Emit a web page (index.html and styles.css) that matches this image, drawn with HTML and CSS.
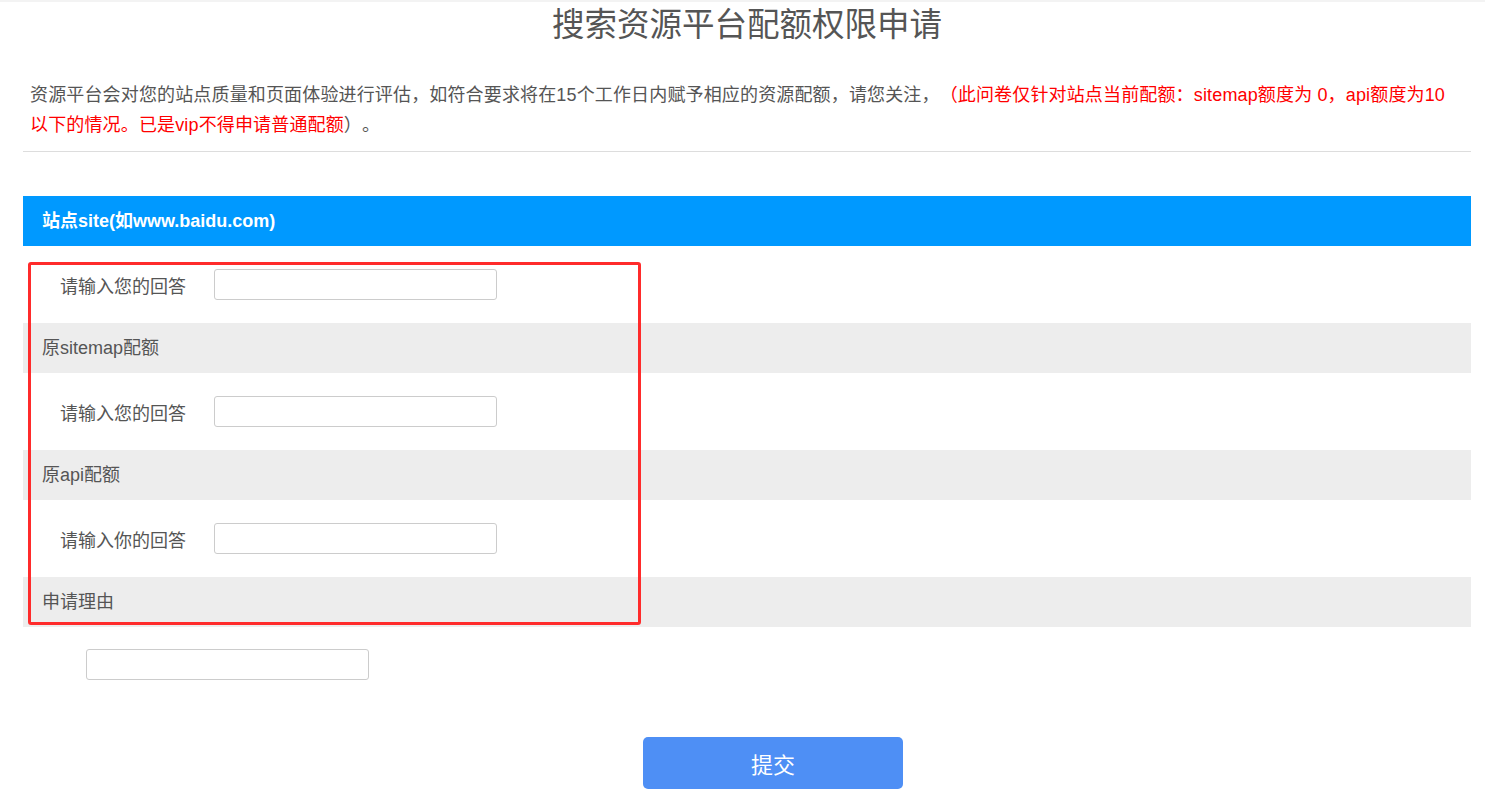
FILE: index.html
```html
<!DOCTYPE html>
<html lang="zh">
<head>
<meta charset="utf-8">
<title>搜索资源平台配额权限申请</title>
<link rel="stylesheet" href="styles.css">
</head>
<body>
<div class="page">
  <h1 class="title">搜索资源平台配额权限申请</h1>
  <p class="intro">资源平台会对您的站点质量和页面体验进行评估，如符合要求将在15个工作日内赋予相应的资源配额，请您关注，<span class="warn">（此问卷仅针对站点当前配额：sitemap额度为 0，api额度为10以下的情况。已是vip不得申请普通配额</span>）。</p>
  <div class="divider"></div>

  <div class="form">
    <div class="section-head">站点site(如www.baidu.com)</div>
    <div class="answer-row">
      <span class="answer-label">请输入您的回答</span>
      <input class="answer-input" type="text">
    </div>
    <div class="question">原sitemap配额</div>
    <div class="answer-row">
      <span class="answer-label">请输入您的回答</span>
      <input class="answer-input" type="text">
    </div>
    <div class="question">原api配额</div>
    <div class="answer-row">
      <span class="answer-label">请输入你的回答</span>
      <input class="answer-input" type="text">
    </div>
    <div class="question">申请理由</div>
    <div class="reason-row">
      <input class="answer-input" type="text">
    </div>
    <div class="actions">
      <button class="submit" type="button">提交</button>
    </div>
    <div class="highlight"></div>
  </div>
</div>
</body>
</html>
```

FILE: styles.css
```css
* { box-sizing: border-box; }
html, body { margin: 0; padding: 0; background: #fff; }
body {
  font-family: "Liberation Sans", "Noto Sans CJK SC", sans-serif;
  color: #555;
  border-top: 2px solid #f3f3f3;
}
.page {
  padding: 0 14px 0 23px;
}
.title {
  margin: 0;
  font-size: 32.5px;
  font-weight: normal;
  line-height: 46px;
  text-align: center;
  color: #555;
}
.intro {
  margin: 32px 0 0;
  padding: 0 22px 0 7px;
  font-size: 18px;
  line-height: 30px;
  color: #555;
  text-spacing-trim: space-all;
  letter-spacing: 0.15px;
}
.warn { color: #ff0000; }
.divider {
  margin-top: 11px;
  height: 1px;
  background: #dddddd;
}
.form {
  position: relative;
  margin-top: 44px;
}
.section-head {
  height: 50px;
  line-height: 50px;
  padding-left: 19px;
  background: #0099ff;
  color: #fff;
  font-weight: bold;
  font-size: 18px;
}
.answer-row {
  height: 77px;
  display: flex;
  align-items: center;
  padding-left: 37px;
}
.answer-label {
  width: 154px;
  font-size: 18px;
  color: #555;
}
.answer-input {
  width: 283px;
  height: 31px;
  border: 1px solid #cccccc;
  border-radius: 3px;
  background: #fff;
  margin: 0;
  padding: 0 6px;
}
.question {
  height: 50px;
  line-height: 50px;
  padding-left: 19px;
  background: #ededed;
  font-size: 18px;
  color: #555;
}
.reason-row {
  padding: 22px 0 0 63px;
  display: flex;
}
.actions {
  display: flex;
  justify-content: center;
  padding: 57px 0 0;
}
.submit {
  width: 260px;
  height: 52px;
  border: none;
  border-radius: 5px;
  background: #4e8ff5;
  color: #fff;
  font-family: "Liberation Sans", "Noto Sans CJK SC", sans-serif;
  font-size: 22px;
  margin: 0 0 0 52px;
}
.highlight {
  position: absolute;
  left: 5px;
  top: 66px;
  width: 613px;
  height: 363px;
  border: 3px solid #ff2b2b;
  border-radius: 3px;
  pointer-events: none;
}
```
